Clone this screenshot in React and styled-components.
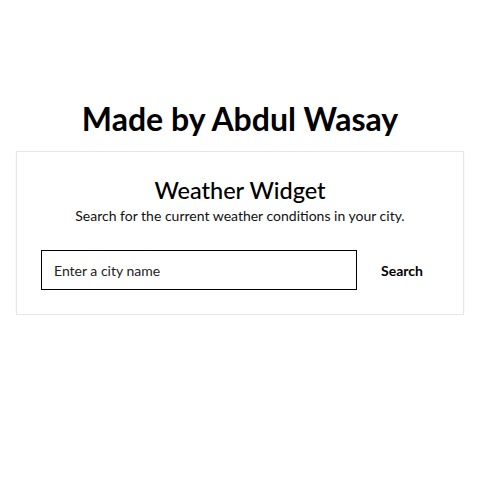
import styled, { createGlobalStyle } from 'styled-components';

const GlobalStyle = createGlobalStyle`
    body {
        margin: 0;
        background: #ffffff;
        font-family: Lato, "Noto Sans", sans-serif;
        color: #000000;
    }
`;

function App() {
    return (
        <Page>
            <GlobalStyle />
            <Title>Made by Abdul Wasay</Title>
            <Card>
                <CardHeader>
                    <h2>Weather Widget</h2>
                    <p>Search for the current weather conditions in your city.</p>
                </CardHeader>
                <SearchForm onSubmit={(e) => e.preventDefault()}>
                    <CityInput type="text" placeholder="Enter a city name" />
                    <SearchButton type="submit">Search</SearchButton>
                </SearchForm>
            </Card>
        </Page>
    );
}

const Page = styled.div`
    padding: 101px 0 0 16px;
`;

const Title = styled.h1`
    width: 448px;
    margin: 0 0 14px 0;
    font-size: 32px;
    line-height: 36px;
    font-weight: 700;
    text-align: center;
`;

const Card = styled.div`
    width: 448px;
    box-sizing: border-box;
    border: 1px solid #e5e7eb;
    box-shadow: 0 1px 2px rgba(0, 0, 0, 0.05);
    padding: 22px 24px 24px;
`;

const CardHeader = styled.div`
    text-align: center;
    margin-bottom: 24px;
    h2 {
        margin: 0;
        font-size: 23.5px;
        line-height: 32px;
        font-weight: 500;
    }
    p {
        margin: 0;
        font-size: 14px;
        line-height: 20px;
        color: #111111;
    }
`;

const SearchForm = styled.form`
    display: flex;
    align-items: center;
    gap: 8px;
`;

const CityInput = styled.input`
    flex: 1;
    height: 40px;
    box-sizing: border-box;
    border: 1px solid #000000;
    padding: 0 12px;
    font-family: inherit;
    font-size: 14px;
    outline: none;
    &::placeholder {
        color: #222222;
    }
`;

const SearchButton = styled.button`
    height: 40px;
    padding: 0 16px;
    border: none;
    background: transparent;
    font-family: inherit;
    font-size: 14px;
    font-weight: 700;
    color: #000000;
    cursor: pointer;
`;

export default App;
